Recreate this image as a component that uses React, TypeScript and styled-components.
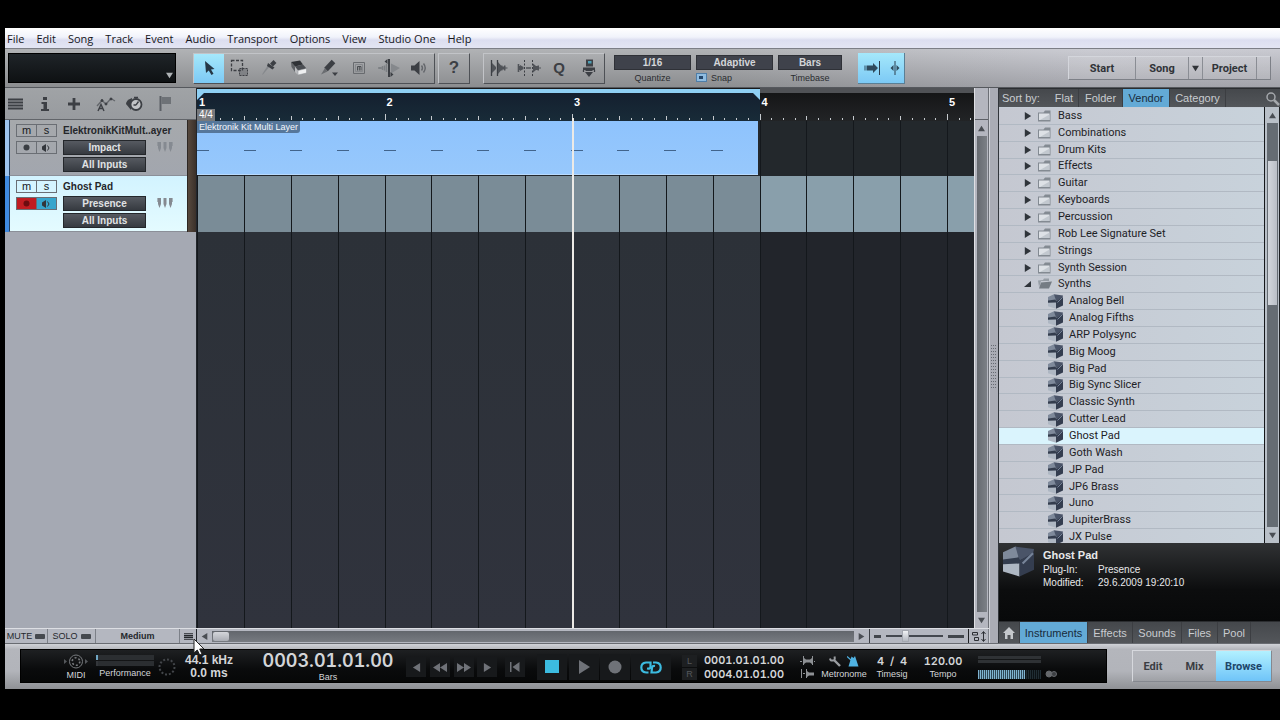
import React from "react";
import styled, { createGlobalStyle, css } from "styled-components";

const sans = `"Liberation Sans", Arial, sans-serif`;
const ink = "#3c3f44";

const GlobalStyle = createGlobalStyle`
  * { box-sizing: border-box; }
  body { margin: 0; background: #000; font-family: ${sans}; font-size: 11px; color: #17191c; }
  button, select, input { font: inherit; color: inherit; margin: 0; padding: 0; border: 0; background: none; border-radius: 0; }
  button, select { cursor: default; }
  ul { list-style: none; margin: 0; padding: 0; }
  svg { display: block; flex: none; }
`;

const Screen = styled.div`
  min-height: 100vh;
  padding: 28px 0 31px 5px;
  display: flex;
`;

const Window = styled.div`
  position: relative;
  flex: 1;
  min-width: 0;
  display: flex;
  flex-direction: column;
  background: #a3a6ae;
`;

/* ---------- menu ---------- */

const MenuBar = styled.nav`
  height: 21px;
  flex: none;
  display: flex;
  align-items: center;
  gap: 12px;
  padding: 1px 2px 0;
  background: linear-gradient(#fff 0%, #f1f3fb 45%, #dcdef0 60%, #e3e5f3 100%);
  border-bottom: 1px solid #7c7e86;
`;

const MenuItem = styled.button`
  font-family: "Open Sans", "Noto Sans", sans-serif;
  font-size: 11px;
  line-height: 18px;
  color: #16161c;
  white-space: nowrap;
`;

/* ---------- toolbar ---------- */

const Toolbar = styled.header`
  height: 39px;
  flex: none;
  display: flex;
  align-items: center;
  padding: 0 9px 0 3px;
  background: linear-gradient(rgba(255, 255, 255, 0.12), rgba(0, 0, 0, 0.16)),
    linear-gradient(90deg, #a6a8ab 0%, #a6a8ab 55%, #c4c5cd 85%, #c2c3cb 100%);
  border-bottom: 1px solid #55585d;
`;

const Display = styled.select`
  appearance: none;
  width: 168px;
  height: 30px;
  margin-right: 17px;
  border: 1px solid #000;
  background: linear-gradient(#1f2428, #0e1113);
  color: #c5c9cc;
`;

const DisplayWrap = styled.div`
  position: relative;
  svg { position: absolute; right: 20px; bottom: 4px; pointer-events: none; }
`;

const Group = styled.div`
  display: flex;
  height: 31px;
  flex: none;
  border: 1px solid #c2c4c8;
  border-right-color: #4e5156;
  border-bottom-color: #4e5156;
`;

const HelpGroup = styled(Group)`
  margin-left: 3px;
`;

const EditGroup = styled(Group)`
  margin: 0 9px 0 13px;
`;

const Tool = styled.button<{ $active?: boolean }>`
  width: 30px;
  height: 100%;
  display: flex;
  align-items: center;
  justify-content: center;
  color: ${ink};
  ${(p) => p.$active && css`background: linear-gradient(#a5e8fb, #7cc9f5);`}
`;

const ToolGlyph = styled.span<{ $size: number }>`
  font-size: ${(p) => p.$size}px;
  line-height: 20px;
  font-weight: bold;
`;

const Field = styled.div<{ $w: number }>`
  width: ${(p) => p.$w}px;
  display: flex;
  flex-direction: column;
  align-items: center;
  gap: 2px;
  padding-top: 2px;
  margin-right: 5px;
`;

const FieldSelect = styled.select`
  appearance: none;
  width: 100%;
  height: 15px;
  border: 1px solid #2f3137;
  background: #3f424b;
  color: #d3d5d9;
  font-size: 10px;
  font-weight: bold;
  line-height: 13px;
  text-align: center;
  text-align-last: center;
`;

const FieldLabel = styled.label`
  display: flex;
  gap: 4px;
  align-items: center;
  height: 12px;
  font-size: 9px;
  line-height: 12px;
  color: #2a2c30;
`;

const SnapRow = styled(FieldLabel)`
  align-self: flex-start;
`;

const SnapBox = styled.input`
  appearance: none;
  width: 11px;
  height: 9px;
  border: 1px solid #4f7ea8;
  background: linear-gradient(90deg, transparent 2px, #24466b 2px, #24466b 6px, transparent 6px) 0 2px / 100% 3px no-repeat, #8fbce0;
`;

const FollowGroup = styled.div`
  display: flex;
  margin-left: 11px;
  height: 31px;
  background: linear-gradient(#a5e8fb, #7cc9f5);
  border-right: 1px solid #5a7f95;
  border-bottom: 1px solid #5a7f95;
`;

const FollowButton = styled.button<{ $w: number }>`
  width: ${(p) => p.$w}px;
  display: flex;
  align-items: center;
  justify-content: center;
  color: #2a3c4c;
`;

const PageTabs = styled.div`
  margin-left: auto;
  display: flex;
  height: 24px;
  border: 1px solid #d4d6dc;
  border-right-color: #7d8087;
  border-bottom-color: #7d8087;
`;

const PageTab = styled.button<{ $w: number }>`
  width: ${(p) => p.$w}px;
  padding-top: 1px;
  display: flex;
  align-items: center;
  justify-content: center;
  font-family: Roboto, ${sans};
  font-size: 11px;
  font-weight: 700;
  color: #303338;
  background: rgba(255, 255, 255, 0.12);
  & + & { border-left: 1px solid #8a8d94; }
`;

/* ---------- work area ---------- */

const Work = styled.main`
  flex: 1;
  min-height: 0;
  display: flex;
`;

const Editor = styled.section`
  flex: 1;
  min-width: 0;
  display: flex;
  flex-direction: column;
`;

const EditorTop = styled.div`
  flex: 1;
  min-height: 0;
  display: flex;
`;

const TrackColumn = styled.div`
  width: 192px;
  flex: none;
  background: #a5a9b3;
  border-right: 1px solid #22262c;
`;

const TrackTools = styled.div`
  height: 32px;
  display: flex;
  align-items: center;
  background: linear-gradient(#a0a3a6, #989b9f);
  border-bottom: 1px solid #62656a;
`;

const TrackTool = styled.button<{ $w: number }>`
  width: ${(p) => p.$w}px;
  height: 30px;
  display: flex;
  align-items: center;
  justify-content: center;
  color: ${ink};
`;

const TrackRow = styled.article<{ $selected?: boolean }>`
  height: 56px;
  display: flex;
  padding-left: 4px;
  background: linear-gradient(90deg, ${(p) => (p.$selected ? "#3f8ae0" : "#9ec4ee")} 4px, transparent 4px);
`;

const TrackBody = styled.div<{ $selected?: boolean }>`
  flex: 1;
  display: grid;
  grid-template-columns: 41px 83px auto;
  grid-template-rows: 15px 15px 15px;
  align-content: start;
  align-items: center;
  column-gap: 6px;
  row-gap: 2px;
  padding: 3px 0 0 6px;
  border-left: 1px solid #25405f;
  border-bottom: 1px solid #8b8f98;
  background: ${(p) => (p.$selected ? "linear-gradient(#d2f3ff, #e4fbff)" : "linear-gradient(#a6a9ac, #a2a6ae)")};
`;

const Wood = styled.div`
  width: 9px;
  background: linear-gradient(90deg, #57493e, #3a302a);
  border-left: 1px solid #2d2723;
`;

const Pair = styled.div`
  display: flex;
  height: 13px;
  border: 1px solid #6a6e74;
`;

const Mini = styled.button<{ $bg?: string }>`
  flex: 1;
  display: flex;
  align-items: center;
  justify-content: center;
  font-size: 11px;
  line-height: 11px;
  background: ${(p) => p.$bg ?? "transparent"};
  & + & { border-left: 1px solid #6a6e74; }
`;

const TrackName = styled.h2`
  grid-column: 2 / 4;
  margin: 0;
  font-size: 10px;
  line-height: 14px;
  font-weight: bold;
  color: #24262a;
  white-space: nowrap;
`;

const Slot = styled.button`
  grid-column: 2;
  height: 15px;
  font-size: 10px;
  line-height: 12px;
  font-weight: bold;
  color: #e0e2e4;
  border: 1px solid #24272b;
  background: linear-gradient(#565a61, #363a40);
`;

const KeysButton = styled.button`
  display: flex;
  padding-left: 5px;
`;

/* ---------- arrangement ---------- */

const Arrange = styled.div`
  flex: 1;
  min-width: 0;
  position: relative;
  overflow: hidden;
  background: #22262c;
  display: flex;
`;

const Song = styled.div`
  width: 1500px;
  flex: none;
  position: relative;
  display: grid;
  grid-template-columns: minmax(0, 1fr);
  grid-template-rows: 33px 55px 56px minmax(100px, 1fr);
`;

const Beats = styled.div`
  display: grid;
  grid-template-columns: repeat(32, minmax(0, 1fr));
`;

const Ruler = styled(Beats)`
  grid-template-rows: 5px 28px;
  background: #18191b;
`;

const LoopBar = styled.div`
  grid-area: 1 / 1 / 2 / 13;
  margin-top: 1px;
  background: #8fd0f4;
`;

const LoopRest = styled.div`
  grid-area: 1 / 13 / 2 / 33;
  background: #505256;
`;

const RulerBeat = styled.div<{ $loop: boolean }>`
  position: relative;
  grid-row: 2;
  padding-bottom: 1px;
  display: grid;
  grid-template-columns: repeat(4, 1fr);
  align-items: end;
  background: ${(p) => (p.$loop ? "linear-gradient(#14202f, #182b38)" : "linear-gradient(#151617, #222426)")};
`;

const Tick = styled.i<{ $h: number }>`
  height: ${(p) => p.$h}px;
  border-left: 1px solid #c6cace;
`;

const BarNumber = styled.b`
  position: absolute;
  left: 2px;
  top: 3px;
  font-size: 11px;
  line-height: 12px;
  color: #fff;
`;

const TimeSig = styled.span`
  position: absolute;
  left: 0;
  bottom: 0;
  padding: 0 2px;
  font-size: 10px;
  line-height: 12px;
  color: #fff;
  background: #77797c;
`;

const LoopFlag = styled.svg<{ $end?: boolean }>`
  position: absolute;
  top: 0;
  ${(p) => (p.$end ? "right: 0;" : "left: 0;")}
`;

const Cell = styled.div<{ $bg: string; $col: number }>`
  grid-area: 1 / ${(p) => p.$col};
  background: ${(p) => p.$bg};
  border-left: 1px solid #14181c;
`;

const Clip = styled.div`
  grid-area: 1 / 1 / 2 / 13;
  display: flex;
  flex-direction: column;
  margin: 0 2px 1px 0;
  background: linear-gradient(#8ec3fd, #97c8fc);
  border-bottom: 1px solid #b8dafd;
  z-index: 1;
`;

const ClipName = styled.span`
  align-self: flex-start;
  height: 12px;
  padding: 0 2px;
  border-radius: 0 0 3px 0;
  font-size: 9px;
  line-height: 12px;
  color: #f4f8fc;
  background: #56779b;
`;

const Notes = styled.div`
  display: grid;
  grid-template-columns: repeat(12, 1fr);
  margin-top: 17px;
`;

const Note = styled.i`
  width: 12px;
  height: 1px;
  background: #41648c;
`;

const Playhead = styled.div`
  position: absolute;
  top: 30px;
  bottom: 0;
  left: 375px;
  width: 2px;
  background: #eceae6;
  z-index: 2;
`;

const VScroll = styled.div`
  width: 15px;
  flex: none;
  display: flex;
  flex-direction: column;
  align-items: center;
  border-left: 1px solid #dfe0e4;
  border-right: 1px solid #6c6f76;
  background: #b4b6bf;
`;

const ScrollCorner = styled.div`
  width: 100%;
  height: 32px;
  border-bottom: 1px solid #5d6067;
`;

const ScrollArrow = styled.button`
  width: 15px;
  height: 16px;
  display: flex;
  align-items: center;
  justify-content: center;
  color: #4a4e54;
`;

const VTrack = styled.div`
  flex: 1;
  width: 10px;
  background: linear-gradient(90deg, #666a70, #7c8086);
`;

const Strip = styled.div`
  height: 15px;
  flex: none;
  display: flex;
  background: #b4b7c0;
  border-top: 1px solid #dcdee3;
`;

const StripButton = styled.button<{ $w: number; $wide?: boolean }>`
  width: ${(p) => p.$w}px;
  flex: none;
  display: flex;
  align-items: center;
  justify-content: center;
  gap: 3px;
  font-size: 9px;
  line-height: 12px;
  font-weight: ${(p) => (p.$wide ? "bold" : "normal")};
  color: #25282d;
  border-right: 1px solid #7c8088;
`;

const MenuButton = styled(StripButton)`
  border-right-color: #22262c;
`;

const Led = styled.i`
  width: 10px;
  height: 5px;
  border-radius: 1px;
  background: #45494f;
`;

const HScroll = styled.div`
  flex: 1;
  min-width: 0;
  display: flex;
  align-items: center;
`;

const HTrack = styled.div`
  flex: 1;
  height: 11px;
  background: linear-gradient(#62666c, #777b81);
`;

const HThumb = styled.div`
  width: 16px;
  height: 9px;
  margin: 1px;
  border-radius: 2px;
  background: linear-gradient(#d4d6db, #a9acb3);
`;

const ZoomBox = styled.label`
  width: 100px;
  flex: none;
  display: flex;
  align-items: center;
  gap: 5px;
  padding: 0 4px;
  border-left: 1px solid #3b3e44;
  border-right: 1px solid #1d1f22;
`;

const ZoomSlider = styled.input`
  appearance: none;
  flex: 1;
  min-width: 0;
  height: 12px;
  background: linear-gradient(#44484f, #44484f) center / 100% 2px no-repeat;
  &::-webkit-slider-thumb {
    appearance: none;
    width: 7px;
    height: 12px;
    border: 1px solid #a4a8b0;
    background: linear-gradient(#f0f2f5, #b4b8c0);
  }
`;

const ZoomMark = styled.i<{ $w: number }>`
  width: ${(p) => p.$w}px;
  height: 3px;
  background: #42464c;
`;

const Splitter = styled.div`
  width: 10px;
  flex: none;
  display: flex;
  align-items: center;
  justify-content: center;
  background: #aaacb5;
  border-left: 1px solid #d0d2d8;
  border-right: 1px solid #31353b;
`;

const Grip = styled.i`
  width: 6px;
  height: 45px;
  background: linear-gradient(#aaacb5 2px, transparent 2px) 0 0 / 100% 3px,
    repeating-linear-gradient(90deg, #666a72 0, #666a72 1px, transparent 1px, transparent 2px);
`;

/* ---------- browser ---------- */

const Browser = styled.aside`
  width: 281px;
  flex: none;
  display: flex;
  flex-direction: column;
`;

const TabBar = styled.div<{ $h: number }>`
  height: ${(p) => p.$h}px;
  flex: none;
  display: flex;
  align-items: stretch;
  color: #c9ccd0;
  background: linear-gradient(#45484c, #53565a);
  border-top: 1px solid #2b2d30;
`;

const TabCaption = styled.span`
  width: 51px;
  padding-left: 3px;
  align-self: center;
  line-height: 16px;
`;

const Tab = styled.button<{ $w: number; $on?: boolean }>`
  width: ${(p) => p.$w}px;
  flex: none;
  display: flex;
  align-items: center;
  justify-content: center;
  border-right: 1px solid #3c3e42;
  ${(p) => p.$on && css`color: #182a3a; background: #63aad6;`}
`;

const SearchButton = styled.button`
  margin-left: auto;
  display: flex;
  align-items: center;
`;

const ListArea = styled.div`
  flex: 1 0 436px;
  height: 0;
  overflow: hidden;
  display: flex;
  background: #c5ccd5;
`;

const Tree = styled.ul`
  flex: 1;
  height: 439px;
  padding-top: 1px;
  display: grid;
  grid-auto-rows: minmax(0, 1fr);
`;

const TreeRow = styled.li<{ $on?: boolean }>`
  display: flex;
  border-bottom: 1px solid #b1b9c3;
  background: ${(p) => (p.$on ? "#daf4fd" : "linear-gradient(90deg, #c5c8d1, #c8d2db)")};
`;

const TreeButton = styled.button<{ $child?: boolean }>`
  flex: 1;
  display: flex;
  align-items: center;
  gap: 6px;
  padding-left: ${(p) => (p.$child ? 49 : 25)}px;
  font-family: Roboto, ${sans};
  font-size: 11px;
  line-height: 14px;
  color: #1e2226;
`;

const BrowserScroll = styled.div`
  width: 16px;
  display: flex;
  flex-direction: column;
  align-items: center;
  border-left: 1px solid #15181b;
  border-right: 1px solid #1c1f22;
  background: #b9c0c8;
`;

const BTrack = styled.div`
  flex: 1;
  width: 100%;
  padding: 38px 1px 0;
  background: #656c73;
  border-left: 2px solid #b9c0c8;
  border-right: 1px solid #b9c0c8;
`;

const BThumb = styled.div`
  height: 144px;
  background: linear-gradient(90deg, #d2d6dc, #b9bec6);
`;

const Info = styled.div`
  height: 78px;
  flex: none;
  display: flex;
  gap: 9px;
  padding: 3px 4px;
  color: #e8e9ea;
  background: linear-gradient(#303234, #0c0d0e 60%, #08090a);
`;

const InfoTitle = styled.h3`
  margin: 2px 0 0;
  font-size: 11px;
  line-height: 14px;
`;

const InfoList = styled.dl`
  margin: 1px 0 0;
  display: grid;
  grid-template-columns: 55px auto;
  font-size: 10px;
  line-height: 13px;
  dt, dd { margin: 0; }
`;

/* ---------- transport ---------- */

const Transport = styled.footer`
  height: 46px;
  flex: none;
  display: flex;
  padding: 5px 8px 6px 15px;
  background: linear-gradient(#d0d2d7, #b4b6bc 12%, #b2b4ba 60%, #8f9195);
  border-top: 1px solid #686b71;
`;

const Panel = styled.div`
  flex: 1;
  min-width: 0;
  display: flex;
  align-items: center;
  overflow: hidden;
  padding-top: 2px;
  color: #d3d5d8;
  background: linear-gradient(#1e2022, #0a0b0c 60%, #060707);
  border: 1px solid #000;
`;

const Block = styled.div<{ $w: number; $gap?: number; $ml?: number }>`
  width: ${(p) => p.$w}px;
  margin-left: ${(p) => p.$ml ?? 0}px;
  flex: none;
  display: flex;
  flex-direction: column;
  align-items: center;
  justify-content: center;
  gap: ${(p) => p.$gap ?? 0}px;
  white-space: nowrap;
`;

const ClipLights = styled(Block)`
  align-self: flex-end;
  padding-bottom: 4px;
`;

const Tiny = styled.span`
  font-size: 9px;
  line-height: 12px;
`;

const Value = styled.span`
  font-size: 12px;
  line-height: 13px;
  font-weight: bold;
`;

const Clock = styled.time`
  font-family: Inter, sans-serif;
  font-variant-numeric: tabular-nums;
  font-size: 18px;
  line-height: 20px;
  font-weight: 600;
`;

const SmallClock = styled.time`
  font-family: Inter, sans-serif;
  font-variant-numeric: tabular-nums;
  font-size: 11px;
  line-height: 14px;
  font-weight: 600;
`;

const Meter = styled.div<{ $fill?: boolean }>`
  width: 58px;
  height: 5px;
  background: linear-gradient(90deg, ${(p) => (p.$fill ? "#6fa6c4" : "#33363a")} 2px, #2b2e31 2px);
`;

const PlayKeys = styled.div`
  display: flex;
  align-items: center;
`;

const Key = styled.button<{ $w: number; $h: number; $ml: number; $on?: boolean }>`
  width: ${(p) => p.$w}px;
  height: ${(p) => p.$h}px;
  margin-left: ${(p) => p.$ml}px;
  display: flex;
  align-items: center;
  justify-content: center;
  color: ${(p) => (p.$on ? "#3cbbe0" : "#6f7278")};
  background: #17191b;
`;

const Locator = styled.button`
  width: 15px;
  height: 12px;
  font-size: 9px;
  line-height: 12px;
  color: #55585c;
  background: #1d1f21;
`;

const IconRow = styled.div`
  display: flex;
  align-items: center;
  gap: 6px;
  height: 14px;
`;

const OutBar = styled.div`
  width: 63px;
  height: 3px;
  background: #2f3235;
`;

const OutLevel = styled.div`
  width: 63px;
  height: 9px;
  margin-top: 6px;
  background: linear-gradient(90deg, transparent 47px, rgba(0, 0, 0, 0.75) 47px),
    repeating-linear-gradient(90deg, #7fb3d0 0, #7fb3d0 1px, #2d4656 1px, #2d4656 2px);
`;

const ViewTabs = styled.div`
  width: 140px;
  height: 32px;
  flex: none;
  margin: 1px 0 0 25px;
  display: flex;
  border: 1px solid #d6d8dd;
  border-right-color: #85888f;
  border-bottom-color: #85888f;
`;

const ViewTab = styled.button<{ $w: number; $on?: boolean }>`
  width: ${(p) => p.$w}px;
  flex: none;
  padding-top: 1px;
  font-family: Roboto, ${sans};
  font-size: 11px;
  font-weight: 700;
  color: #3a3d43;
  ${(p) => p.$on && css`color: #1d4568; background: linear-gradient(#b2f1ff, #6fc4f8);`}
`;

const Cursor = styled.svg`
  position: absolute;
  left: 188px;
  bottom: 33px;
  z-index: 3;
`;

/* ---------- drawings ---------- */

const Tri = ({ d, s = 7, c = "currentColor" }: { d: "u" | "d" | "l" | "r"; s?: number; c?: string }) => {
  const shape = { u: "M5 1 10 9H0z", d: "M0 1H10L5 9z", l: "M9 0V10L1 5z", r: "M1 0V10L9 5z" }[d];
  return (
    <svg width={s} height={s} viewBox="0 0 10 10"><path d={shape} fill={c} /></svg>
  );
};

const Ico = ({ w = 20, h = 20, children }: { w?: number; h?: number; children: React.ReactNode }) => (
  <svg width={w} height={h} viewBox={`0 0 ${w} ${h}`} fill="none" stroke="currentColor">{children}</svg>
);

const ArrowIcon = () => <Ico><path d="M6 3 7 15 9.700 12.500 12.500 17 14.500 15.800 12 11.500 15.500 11z" fill="#253746" stroke="none" /></Ico>;
const RangeIcon = () => (
  <Ico>
    <path d="M2.500 2.500h11v10h-11z" strokeDasharray="3 1.500" strokeWidth="1.300" />
    <path d="M10.500 10.500h8v7h-8z" strokeDasharray="2 1" fill="rgba(80,84,90,.35)" />
  </Ico>
);
const KnifeIcon = () => (
  <Ico>
    <path d="M11.500 7.500 4 16.500 3 16.500 9 7z" fill="#85888c" stroke="none" />
    <path d="M9 5 15.500 9.500 13.500 11.500 8 8z" fill="currentColor" stroke="none" />
    <path d="M12.500 7 16 3.500" strokeWidth="4" />
  </Ico>
);
const EraserIcon = () => (
  <Ico>
    <path d="M2 4 11 2.500 14 6.500 6 8.500z" fill="#2f3236" stroke="none" />
    <path d="M2 4 6 8.500V14L2.500 9z" fill="#5f6266" stroke="none" />
    <path d="M6 8.500 14 6.500 17.500 10.500 9 12.500z" fill="#4a4d52" stroke="none" />
    <path d="M6 9 9 12.500V17L6 14z" fill="#b9bbbe" stroke="none" />
    <path d="M9 12.500 17.500 10.500V15L9 17z" fill="#eff0f1" stroke="#8b8e92" strokeWidth=".5" />
  </Ico>
);
const PaintIcon = () => (
  <Ico>
    <path d="M14.500 3.500 7 11.500" strokeWidth="5" />
    <path d="M6 10 2 16.500 8.500 13.500z" fill="#6a6d71" stroke="none" />
    <path d="M13 14.500h6L16 18z" fill="currentColor" stroke="none" />
  </Ico>
);
const MuteToolIcon = () => (
  <Ico>
    <path d="M4.500 4.500h11v11h-11z" stroke="#686b6f" />
    <path d="M6.500 6.500h7v7h-7z" stroke="#85888c" />
    <path d="M8.500 12.500V8.500h3.500V12.500M10.300 8.500V12.500" stroke="#4b4e52" />
  </Ico>
);
const BendIcon = () => (
  <Ico w={24}>
    <path d="M1 10h4M3 9v2M5.500 8v4M7.500 7.500v5M9.500 6v8" stroke="#7c7f83" strokeWidth="1.500" />
    <path d="M14 5.500v10l4-2.500 5-3-5-2.500z" fill="#85888c" stroke="none" />
    <path d="M12 1v18" strokeWidth="2" />
    <path d="M10.500 1 7.500 3.500 10.500 6zM13.500 14 16.500 16.500 13.500 19z" fill="currentColor" stroke="none" />
  </Ico>
);
const SpeakerIcon = () => (
  <Ico>
    <path d="M2 7.500h3.500L10.500 3v14L5.500 12.500H2z" fill="currentColor" stroke="none" />
    <path d="M12.500 7.500q2 2.500 0 5M14.500 5.500q3.500 4.500 0 9" stroke="#63666b" strokeWidth="1.400" />
  </Ico>
);
const TransientIcon = () => (
  <Ico>
    <path d="M2.500 2v16M8.500 2v16" strokeWidth="1.300" />
    <path d="M3 5 7 9v2L3 15zM9 4 12 7.500h1.500v1h1.500V7.500h1.500v2h2v1h-2V12.500H15v-1h-1.500v1H12l-3 3.500z" fill="#505358" stroke="none" />
  </Ico>
);
const SplitIcon = () => (
  <Ico w={24}>
    <path d="M7.500 2v16M15.500 2v16" strokeDasharray="2 1.500" />
    <path d="M1.500 6v8M3 8v4M9 10h5" stroke="#505358" strokeWidth="1.600" />
    <path d="M16 5.500 19 8h1.500V7.500H22v2h2v1h-2V12.500h-1.500v-.5H19L16 14.500zM3 7 6.500 9v2L3 13z" fill="#505358" stroke="none" />
  </Ico>
);
const MacroIcon = () => (
  <Ico>
    <path d="M7 1.500h7v7H7z" fill="#3e4146" stroke="none" />
    <path d="M9 3h3.500v2.500H9z" fill="#4d9fb5" stroke="none" />
    <path d="M4 9.500h12v2.500h-2.500v1h-7v-1H4z" fill="currentColor" stroke="none" />
    <path d="M6 14h8l-4 5z" fill="currentColor" stroke="none" />
    <path d="M4.500 12v2M15.500 12v2" strokeWidth="1.300" />
  </Ico>
);
const AutoScrollIcon = () => (
  <Ico w={18} h={16}>
    <path d="M1 5.500h3v5H1z" fill="#5f93ad" stroke="none" />
    <path d="M4 5.500h6V3l5 5-5 5v-2.500H4z" fill="#2f4a5c" stroke="none" />
    <path d="M16.500 1v14" />
  </Ico>
);
const CursorFollowIcon = () => (
  <Ico w={12} h={16}>
    <path d="M6 1v14" />
    <path d="M4.500 5v6L1.500 8zM7.500 5v6l3-3z" fill="#2f4a5c" stroke="none" />
  </Ico>
);
const LinesIcon = ({ w = 15, h = 12 }: { w?: number; h?: number }) => (
  <svg width={w} height={h} viewBox="0 0 15 12" stroke="currentColor" strokeWidth="1.800"><path d="M0 1.500h15M0 4.500h15M0 7.500h15M0 10.500h15" /></svg>
);
const InfoIcon = () => (
  <Ico w={12} h={16}><path d="M4 1h4v3H4zM2.500 6H8v7h2v2H2v-2h2.500V8h-2z" fill="currentColor" stroke="none" /></Ico>
);
const PlusIcon = () => <Ico w={14} h={14}><path d="M7 1v12M1 7h12" strokeWidth="2.800" /></Ico>;
const AutomationIcon = () => (
  <Ico w={20} h={16}>
    <path d="M1 10 6 4.500 10 8 15 2.500 19 5" stroke="#63666b" strokeWidth="1.300" />
    <circle cx="6" cy="4.500" r="1" fill="currentColor" /><circle cx="10" cy="8" r="1" fill="currentColor" /><circle cx="15" cy="3" r="1" fill="currentColor" />
    <path d="M2 15 5 8.500 8 15M3.200 12.500h3.600" strokeWidth="1.400" />
  </Ico>
);
const TempoIcon = () => (
  <Ico w={18} h={16}>
    <path d="M6 2Q0 4 0 8l5 6z" fill="currentColor" stroke="none" />
    <circle cx="10" cy="8.500" r="5.500" fill="#c1c3c6" strokeWidth="1.800" />
    <path d="M10 9 12.500 5.500M10 9H7.500M8 1.500h4" strokeWidth="1.300" />
  </Ico>
);
const FlagIcon = () => (
  <Ico w={14} h={17}>
    <path d="M2.500 1v15" stroke="#5b5f65" strokeWidth="2" />
    <path d="M3.500 2h9.500v7H3.500z" fill="#6e7277" stroke="none" />
  </Ico>
);
const KeysIcon = () => (
  <svg width="16" height="11" viewBox="0 0 16 11" fill="#858a91">
    <path d="M1 0h3v6L2.500 10 1 6zM6.500 0h3v6L8 10 6.500 6zM12 0h3v6l-1.500 4L12 6z" />
    <path d="M0 0h1v4H0zM15 0h1v4h-1z" opacity=".6" />
  </svg>
);
const MonitorIcon = () => (
  <svg width="9" height="8" viewBox="0 0 9 8"><path d="M4 0v8L0 5.500v-3z" fill="#32363b" /><path d="M5.500 1.500q3 2.500 0 5" fill="none" stroke="#32363b" /></svg>
);
const FolderIcon = ({ open }: { open?: boolean }) => (
  <svg width="14" height="12" viewBox="0 0 14 12">
    {open ? (
      <>
        <path d="M0 2.500 5 2 6 .5 11 .5V3H3L1 9z" fill="#969da5" />
        <path d="M3 4.500 14 3.500 11 10.500H1z" fill="#757c84" />
      </>
    ) : (
      <>
        <path d="M0 2.500H5.500L7 .5H12.500V11.500H0z" fill="#838a92" />
        <path d="M1 3.500h10.500v6.500H1z" fill="#dde1e6" />
        <path d="M2 10 11.500 4.500V10z" fill="#c2c8cf" />
      </>
    )}
  </svg>
);
const CubeIcon = ({ s = 15 }: { s?: number }) => (
  <svg width={s} height={s} viewBox="0 0 15 15">
    <path d="M0 3 6 .3 8 2 7.500 6 0 7z" fill="#7f8a9b" />
    <path d="M6 .3 15 1.500 14.500 4 8 7z" fill="#4a5468" />
    <path d="M0 6.500 7.500 5.500 9 9 0 9z" fill="#333c4d" />
    <path d="M0 8.800 8 8.500V14.800L0 12.300z" fill="#aeb7c3" />
    <path d="M8 7 15 3v8.500L8 14.800z" fill="#343d4f" />
    <path d="M9.500 8.500 14.500 3.500" stroke="#78859a" strokeWidth="1" />
  </svg>
);
const SearchIcon = () => (
  <svg width="15" height="15" viewBox="0 0 15 15" fill="none" stroke="#a5a8ac"><circle cx="6" cy="6" r="4" strokeWidth="1.500" /><path d="m9 9 5 5" strokeWidth="2.500" /></svg>
);
const HomeIcon = () => (
  <svg width="12" height="12" viewBox="0 0 12 12" fill="#c5c8cc"><path d="M6 0 12 6h-2v6H7.500V8h-3v4H2V6H0z" /></svg>
);
const MidiIcon = () => (
  <svg width="24" height="15" viewBox="0 0 24 15" fill="none" stroke="#777a7e">
    <circle cx="12" cy="7.500" r="6.500" /><circle cx="12" cy="7.500" r="3.800" strokeDasharray="2 2" strokeWidth="1.600" />
    <path d="M0 5v5l3-2.500zM21 5v5l3-2.500z" fill="#55585c" stroke="none" />
  </svg>
);
const BusyIcon = () => (
  <svg width="18" height="18" viewBox="0 0 18 18" fill="none" stroke="#43464a"><circle cx="9" cy="9" r="7.500" strokeWidth="2" strokeDasharray="2 1.900" /></svg>
);
const DoubleTri = ({ d }: { d: "l" | "r" }) => (
  <svg width="14" height="9" viewBox="0 0 14 9" fill="currentColor"><path d={d === "l" ? "M7 0v9L0 4.500zM14 0v9L7 4.500z" : "M0 0v9l7-4.500zM7 0v9l7-4.500z"} /></svg>
);
const ToStartIcon = () => (
  <svg width="10" height="10" viewBox="0 0 10 10" fill="currentColor"><path d="M0 0h1.500v10H0zM9.500 0v10L2.500 5z" /></svg>
);
const LoopIcon = () => (
  <svg width="22" height="13" viewBox="0 0 22 13" fill="none" stroke="currentColor" strokeWidth="2.200">
    <path d="M6 11.500Q1.300 11 1.300 6.500T6 1.500H10.500V6Q10.500 8 7 7.500" />
    <path d="M6 11.500H8.500M15 5Q12 4.500 12 7L11.500 11.500H16Q20.700 11 20.700 6.500T16 1.500H13" />
  </svg>
);
const PunchIcon = ({ full }: { full?: boolean }) => (
  <svg width="15" height="9" viewBox="0 0 15 9" fill="#8d9094">
    {full ? (
      <path d="M0 5h2v1H0zM3 0h1v9H3zM4 2l2 1.500h4L12 2V0h1v9h-1V8l-2-1.500H6L4 8zM14 5h1v1h-1z" />
    ) : (
      <path d="M1 0h1v9H1zM3 4h2v1H3zM6 0h1v2l2 1.500h5v3H9L7 8v1H6z" />
    )}
  </svg>
);
const WrenchIcon = () => (
  <svg width="12" height="12" viewBox="0 0 12 12" fill="none" stroke="#9a9da1"><path d="M5 5 11 11" strokeWidth="2.400" /><path d="M1 3.500Q1.500 6 4 5.500T5.500 1.500" strokeWidth="2" /></svg>
);
const MetronomeIcon = () => (
  <svg width="12" height="12" viewBox="0 0 12 12"><path d="M4.500 1.500 6.500 3 8 1 11.500 11.500H1.500z" fill="#4fb2e2" /><path d="M0 1.500 4 5" stroke="#4fb2e2" strokeWidth="1.200" /></svg>
);
const HeightIcon = () => (
  <svg width="14" height="11" viewBox="0 0 14 11" fill="none" stroke="#2c2f34"><path d="M.5 1.500h5v2.500h-5zM2.500 6.500h4v3h-4z" /><path d="M11.500 1v9M9.500 3l2-2.500 2 2.500M9.500 8l2 2.500 2-2.500" /></svg>
);

/* ---------- data ---------- */

const menus = ["File", "Edit", "Song", "Track", "Event", "Audio", "Transport", "Options", "View", "Studio One", "Help"];
const tools: [string, React.ReactNode][] = [
  ["Arrow", <ArrowIcon />], ["Range", <RangeIcon />], ["Split", <KnifeIcon />], ["Eraser", <EraserIcon />],
  ["Paint", <PaintIcon />], ["Mute", <MuteToolIcon />], ["Bend", <BendIcon />], ["Listen", <SpeakerIcon />],
];
const folders = ["Bass", "Combinations", "Drum Kits", "Effects", "Guitar", "Keyboards", "Percussion", "Rob Lee Signature Set", "Strings", "Synth Session", "Synths"];
const presets = ["Analog Bell", "Analog Fifths", "ARP Polysync", "Big Moog", "Big Pad", "Big Sync Slicer", "Classic Synth", "Cutter Lead", "Ghost Pad", "Goth Wash", "JP Pad", "JP6 Brass", "Juno", "JupiterBrass", "JX Pulse"];
const beats = Array.from({ length: 32 }, (_, i) => i);
const loopBeats = 12;
const lastNumberedBeat = 16;

const Track = ({ name, plugin, selected }: { name: string; plugin: string; selected?: boolean }) => (
  <TrackRow $selected={selected}>
    <TrackBody $selected={selected}>
      <Pair><Mini>m</Mini><Mini>s</Mini></Pair>
      <TrackName>{name}</TrackName>
      <Pair>
        <Mini aria-label="Record" $bg={selected ? "#c01d22" : undefined}>
          <svg width="7" height="7"><circle cx="3.500" cy="3.500" r="3" fill={selected ? "#6c0c10" : "#3a3e43"} /></svg>
        </Mini>
        <Mini aria-label="Monitor" $bg={selected ? "#37a6cd" : undefined}><MonitorIcon /></Mini>
      </Pair>
      <Slot>{plugin}</Slot>
      <KeysButton aria-label="Open instrument"><KeysIcon /></KeysButton>
      <Slot>All Inputs</Slot>
    </TrackBody>
    <Wood />
  </TrackRow>
);

const Lane = ({ inside, outside, children }: { inside: string; outside: string; children?: React.ReactNode }) => (
  <Beats>
    {beats.map((b) => <Cell key={b} $col={b + 1} $bg={b < loopBeats ? inside : outside} />)}
    {children}
  </Beats>
);

export default function App() {
  return (
    <Screen>
      <GlobalStyle />
      <Window>
        <MenuBar>{menus.map((m) => <MenuItem key={m}>{m}</MenuItem>)}</MenuBar>

        <Toolbar>
          <DisplayWrap>
            <Display aria-label="Parameter"><option></option></Display>
            <Tri d="d" s={7} c="#aeb2b5" />
          </DisplayWrap>
          <Group>
            {tools.map(([n, icon], i) => <Tool key={n} aria-label={n} $active={i === 0}>{icon}</Tool>)}
          </Group>
          <HelpGroup>
            <Tool aria-label="Help"><ToolGlyph $size={17}>?</ToolGlyph></Tool>
          </HelpGroup>
          <EditGroup>
            <Tool aria-label="Transients"><TransientIcon /></Tool>
            <Tool aria-label="Strip silence"><SplitIcon /></Tool>
            <Tool aria-label="Quantize panel"><ToolGlyph $size={15}>Q</ToolGlyph></Tool>
            <Tool aria-label="Macros"><MacroIcon /></Tool>
          </EditGroup>
          <Field $w={77}>
            <FieldSelect id="quantize"><option>1/16</option></FieldSelect>
            <FieldLabel htmlFor="quantize">Quantize</FieldLabel>
          </Field>
          <Field $w={77}>
            <FieldSelect aria-label="Snap mode"><option>Adaptive</option></FieldSelect>
            <SnapRow><SnapBox type="checkbox" defaultChecked />Snap</SnapRow>
          </Field>
          <Field $w={64}>
            <FieldSelect id="timebase"><option>Bars</option></FieldSelect>
            <FieldLabel htmlFor="timebase">Timebase</FieldLabel>
          </Field>
          <FollowGroup>
            <FollowButton $w={28} aria-label="Autoscroll"><AutoScrollIcon /></FollowButton>
            <FollowButton $w={18} aria-label="Cursor follows edit"><CursorFollowIcon /></FollowButton>
          </FollowGroup>
          <PageTabs>
            <PageTab $w={66}>Start</PageTab>
            <PageTab $w={53}>Song</PageTab>
            <PageTab $w={14} aria-label="Open songs"><Tri d="d" /></PageTab>
            <PageTab $w={54}>Project</PageTab>
            <PageTab $w={14} aria-label="Open projects" />
          </PageTabs>
        </Toolbar>

        <Work>
          <Editor>
            <EditorTop>
              <TrackColumn>
                <TrackTools>
                  <TrackTool $w={20} aria-label="Track list"><LinesIcon /></TrackTool>
                  <TrackTool $w={39} aria-label="Inspector"><InfoIcon /></TrackTool>
                  <TrackTool $w={20} aria-label="Add track"><PlusIcon /></TrackTool>
                  <TrackTool $w={44} aria-label="Automation"><AutomationIcon /></TrackTool>
                  <TrackTool $w={14} aria-label="Tempo track"><TempoIcon /></TrackTool>
                  <TrackTool $w={46} aria-label="Marker track"><FlagIcon /></TrackTool>
                </TrackTools>
                <Track name="ElektronikKitMult..ayer" plugin="Impact" />
                <Track name="Ghost Pad" plugin="Presence" selected />
              </TrackColumn>

              <Arrange>
                <Song>
                  <Ruler>
                    <LoopBar />
                    <LoopRest />
                    {beats.map((b) => (
                      <RulerBeat key={b} $loop={b < loopBeats}>
                        {b === 0 && <LoopFlag width="8" height="8"><path d="M0 0h7L0 7z" fill="#8fd0f4" /></LoopFlag>}
                        {b === loopBeats - 1 && <LoopFlag $end width="7" height="7"><path d="M0 0h7v7z" fill="#8fd0f4" /></LoopFlag>}
                        {b % 4 === 0 && b <= lastNumberedBeat && <BarNumber>{b / 4 + 1}</BarNumber>}
                        {b === 0 && <TimeSig>4/4</TimeSig>}
                        <Tick $h={b % 4 === 0 ? 6 : 4} /><Tick $h={2} /><Tick $h={2} /><Tick $h={2} />
                      </RulerBeat>
                    ))}
                  </Ruler>
                  <Lane inside="#23282d" outside="#23282c">
                    <Clip>
                      <ClipName>Elektronik Kit Multi Layer</ClipName>
                      <Notes>{beats.slice(0, loopBeats).map((b) => <Note key={b} />)}</Notes>
                    </Clip>
                  </Lane>
                  <Lane inside="#7a8c97" outside="#899fab" />
                  <Lane inside="linear-gradient(#2c3138, #30333d)" outside="#22252b" />
                  <Playhead />
                </Song>
              </Arrange>

              <VScroll>
                <ScrollCorner />
                <ScrollArrow aria-label="Scroll up"><Tri d="u" /></ScrollArrow>
                <VTrack />
                <ScrollArrow aria-label="Scroll down"><Tri d="d" /></ScrollArrow>
              </VScroll>
            </EditorTop>

            <Strip>
              <StripButton $w={43}>MUTE <Led /></StripButton>
              <StripButton $w={48}>SOLO <Led /></StripButton>
              <StripButton $w={84} $wide>Medium</StripButton>
              <MenuButton $w={17} aria-label="Track height menu"><LinesIcon w={9} h={9} /></MenuButton>
              <HScroll>
                <ScrollArrow aria-label="Scroll left"><Tri d="l" /></ScrollArrow>
                <HTrack><HThumb /></HTrack>
                <ScrollArrow aria-label="Scroll right"><Tri d="r" /></ScrollArrow>
              </HScroll>
              <ZoomBox>
                <ZoomMark $w={7} />
                <ZoomSlider type="range" aria-label="Zoom" min={0} max={100} defaultValue={32} />
                <ZoomMark $w={16} />
              </ZoomBox>
              <StripButton $w={20} aria-label="Vertical zoom"><HeightIcon /></StripButton>
            </Strip>
          </Editor>

          <Splitter><Grip /></Splitter>

          <Browser>
            <TabBar $h={19}>
              <TabCaption>Sort by:</TabCaption>
              <Tab $w={29}>Flat</Tab>
              <Tab $w={44}>Folder</Tab>
              <Tab $w={47} $on>Vendor</Tab>
              <Tab $w={56}>Category</Tab>
              <SearchButton aria-label="Search"><SearchIcon /></SearchButton>
            </TabBar>
            <ListArea>
              <Tree>
                {folders.map((f) => {
                  const open = f === "Synths";
                  return (
                    <TreeRow key={f}>
                      <TreeButton>
                        {open ? <svg width="8" height="8"><path d="M7 1v6H0z" fill="#2f343a" /></svg> : <Tri d="r" s={8} c="#2f343a" />}
                        <FolderIcon open={open} />
                        {f}
                      </TreeButton>
                    </TreeRow>
                  );
                })}
                {presets.map((p) => (
                  <TreeRow key={p} $on={p === "Ghost Pad"}>
                    <TreeButton $child><CubeIcon />{p}</TreeButton>
                  </TreeRow>
                ))}
              </Tree>
              <BrowserScroll>
                <ScrollArrow aria-label="Scroll list up"><Tri d="u" /></ScrollArrow>
                <BTrack><BThumb /></BTrack>
                <ScrollArrow aria-label="Scroll list down"><Tri d="d" /></ScrollArrow>
              </BrowserScroll>
            </ListArea>
            <Info>
              <CubeIcon s={31} />
              <div>
                <InfoTitle>Ghost Pad</InfoTitle>
                <InfoList>
                  <dt>Plug-In:</dt><dd>Presence</dd>
                  <dt>Modified:</dt><dd>29.6.2009 19:20:10</dd>
                </InfoList>
              </div>
            </Info>
            <TabBar $h={22}>
              <Tab $w={21} aria-label="Home"><HomeIcon /></Tab>
              <Tab $w={68} $on>Instruments</Tab>
              <Tab $w={45}>Effects</Tab>
              <Tab $w={49}>Sounds</Tab>
              <Tab $w={36}>Files</Tab>
              <Tab $w={33}>Pool</Tab>
            </TabBar>
          </Browser>
        </Work>

        <Transport>
          <Panel>
            <Block $w={30} $ml={40}><MidiIcon /><Tiny>MIDI</Tiny></Block>
            <Block $w={58} $ml={5} $gap={1}><Meter $fill /><Meter /><Tiny>Performance</Tiny></Block>
            <Block $w={18} $ml={4}><BusyIcon /></Block>
            <Block $w={60} $ml={3}><Value>44.1 kHz</Value><Value>0.0 ms</Value></Block>
            <Block $w={140} $ml={19}><Clock>0003.01.01.00</Clock><Tiny>Bars</Tiny></Block>
            <PlayKeys>
              <Key $w={20} $h={20} $ml={8} aria-label="Previous"><Tri d="l" s={9} /></Key>
              <Key $w={20} $h={20} $ml={4} aria-label="Rewind"><DoubleTri d="l" /></Key>
              <Key $w={20} $h={20} $ml={4} aria-label="Forward"><DoubleTri d="r" /></Key>
              <Key $w={20} $h={20} $ml={3} aria-label="Next"><Tri d="r" s={9} /></Key>
              <Key $w={20} $h={20} $ml={8} aria-label="Return to zero"><ToStartIcon /></Key>
              <Key $w={30} $h={26} $ml={12} $on aria-label="Stop"><svg width="14" height="14"><path d="M0 0h14v13H0z" fill="currentColor" /></svg></Key>
              <Key $w={30} $h={26} $ml={2} aria-label="Play"><svg width="12" height="14"><path d="M1 0v14l11-7z" fill="currentColor" /></svg></Key>
              <Key $w={30} $h={26} $ml={1} aria-label="Record"><svg width="14" height="14"><circle cx="7" cy="7" r="6.500" fill="currentColor" /></svg></Key>
              <Key $w={40} $h={26} $ml={1} $on aria-label="Loop"><LoopIcon /></Key>
            </PlayKeys>
            <Block $w={15} $ml={11} $gap={1}><Locator>L</Locator><Locator>R</Locator></Block>
            <Block $w={84} $ml={5}><SmallClock>0001.01.01.00</SmallClock><SmallClock>0004.01.01.00</SmallClock></Block>
            <Block $w={15} $ml={14} $gap={4}><PunchIcon full /><PunchIcon /></Block>
            <Block $w={46} $ml={6}><IconRow><WrenchIcon /><MetronomeIcon /></IconRow><Tiny>Metronome</Tiny></Block>
            <Block $w={40} $ml={5}><SmallClock>4&nbsp; /&nbsp; 4</SmallClock><Tiny>Timesig</Tiny></Block>
            <Block $w={44} $ml={9}><SmallClock>120.00</SmallClock><Tiny>Tempo</Tiny></Block>
            <Block $w={63} $ml={13} $gap={1}><OutBar /><OutBar /><OutLevel /></Block>
            <ClipLights $w={12} $ml={4}>
              <svg width="12" height="8" fill="#3c3f42" stroke="#66696d"><circle cx="4" cy="4" r="3" fill="#66696d" /><circle cx="9" cy="4" r="2.500" /></svg>
            </ClipLights>
          </Panel>
          <ViewTabs>
            <ViewTab $w={40}>Edit</ViewTab>
            <ViewTab $w={43}>Mix</ViewTab>
            <ViewTab $w={55} $on>Browse</ViewTab>
          </ViewTabs>
        </Transport>

        <Cursor width="12" height="18" viewBox="0 0 12 18">
          <path d="M1 1v14l3.300-3 2.400 5 2.300-1-2.300-5H11z" fill="#fff" stroke="#222" />
        </Cursor>
      </Window>
    </Screen>
  );
}
